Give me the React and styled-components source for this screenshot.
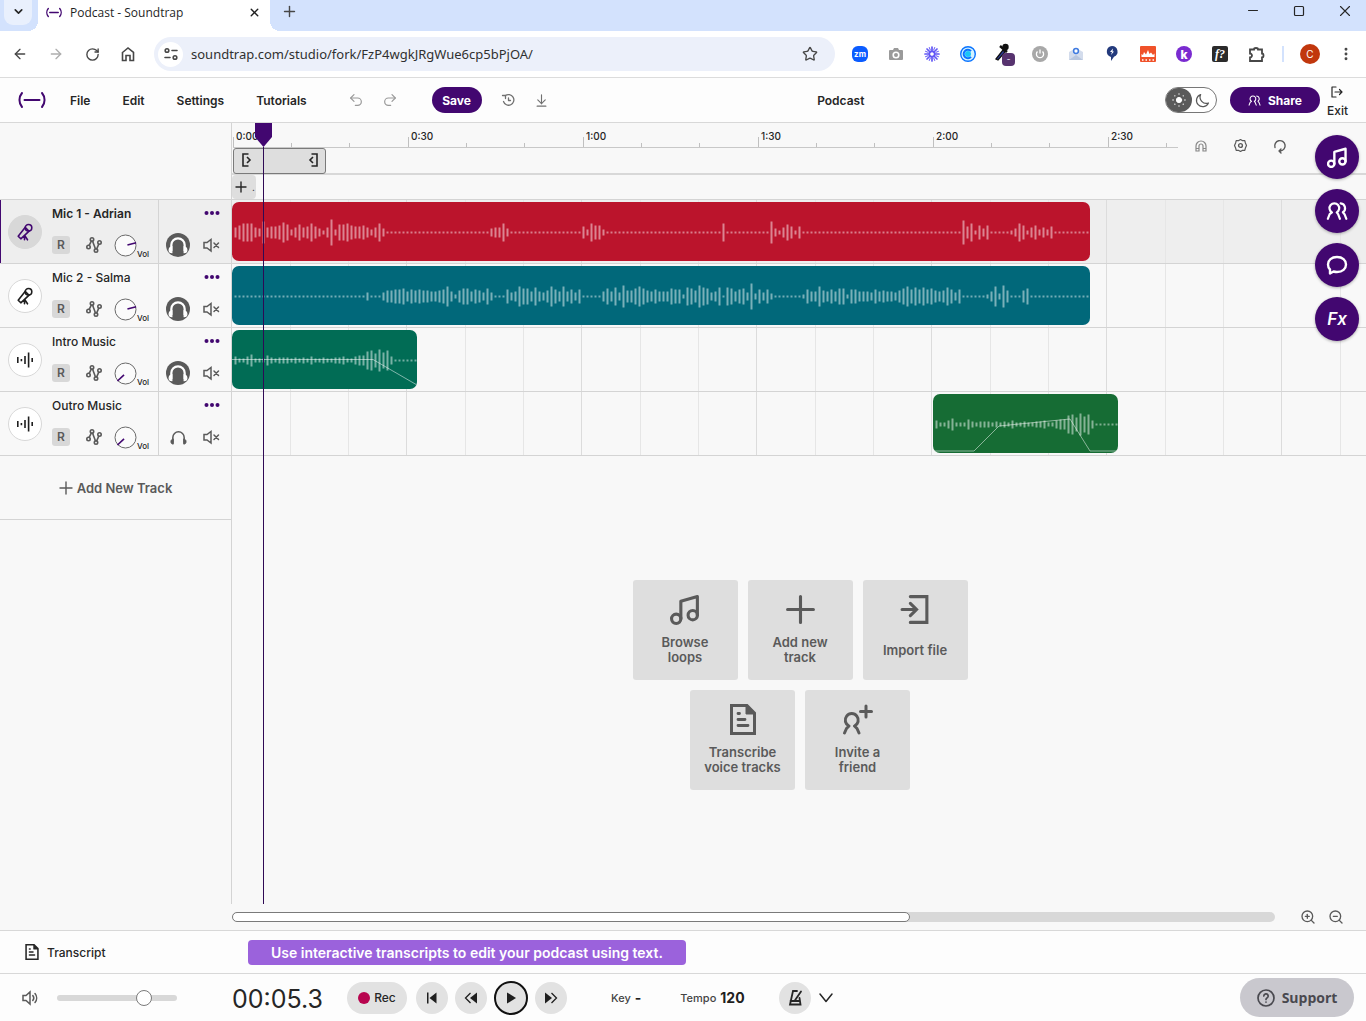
import React, { useState } from 'react';
import styled, { createGlobalStyle } from 'styled-components';
import {
  ArrowDownToLine,
  ArrowLeft,
  ArrowRight,
  ChevronDown,
  EllipsisVertical,
  Plus,
  Redo2,
  RotateCw,
  Star,
  Undo2,
  X,
  ZoomIn,
  ZoomOut,
} from 'lucide-react';

const GlobalStyle = createGlobalStyle`
  *, *::before, *::after {
    box-sizing: border-box;
  }

  body {
    margin: 0;
    background: #f8f8f8;
    color: #262626;
    font-family: Inter, 'Liberation Sans', sans-serif;
    font-size: 13px;
  }

  button, input {
    margin: 0;
    padding: 0;
    border: 0;
    background: none;
    color: inherit;
    font: inherit;
  }

  button {
    cursor: pointer;
  }

  a {
    color: inherit;
    text-decoration: none;
  }

  svg {
    display: block;
    flex: none;
  }
`;

const Page = styled.div`
  display: flex;
  flex-direction: column;
  min-height: 100vh;
`;

/* ---------- browser window ---------- */

const TabStrip = styled.div`
  display: flex;
  align-items: flex-start;
  height: 31px;
  background: #d3e2fd;
  font-family: 'Open Sans', 'Noto Sans', sans-serif;
`;

const TabSearch = styled.button`
  display: flex;
  align-items: center;
  justify-content: center;
  width: 28px;
  height: 25px;
  margin: 0 6px 0 4px;
  padding-bottom: 2px;
  border-radius: 0 0 9px 9px;
  background: #e9f0fd;
`;

const Tab = styled.div`
  position: relative;
  display: flex;
  align-items: center;
  gap: 8px;
  width: 232px;
  height: 31px;
  padding: 0 9px 7px 8px;
  background: #fff;
  font-size: 12px;
  color: #1f1f1f;

  span {
    flex: 1;
  }

  &::before,
  &::after {
    content: '';
    position: absolute;
    bottom: 0;
    width: 10px;
    height: 10px;
  }

  &::before {
    right: 100%;
    background: radial-gradient(circle at 0 0, transparent 10px, #fff 10px);
  }

  &::after {
    left: 100%;
    background: radial-gradient(circle at 100% 0, transparent 10px, #fff 10px);
  }
`;

const NewTab = styled.button`
  padding: 3px 11px;
`;

const WindowButtons = styled.div`
  display: flex;
  gap: 30px;
  margin-left: auto;
  padding: 3px 13px 0 0;
`;

const BrowserBar = styled.div`
  display: flex;
  align-items: center;
  height: 47px;
  padding-left: 12px;
  border-bottom: 1px solid #dcdcdc;
  background: #fff;
  color: #474747;
`;

const NavButton = styled.button`
  display: flex;
  align-items: center;
  justify-content: center;
  width: 36px;
  height: 32px;
  padding-right: 20px;
  color: ${props => (props.$dim ? '#aeaeae' : '#474747')};
`;

const MoreButton = styled.button`
  display: flex;
  align-items: center;
  width: 28px;
  height: 32px;
`;

const Omnibox = styled.div`
  display: flex;
  flex: 1;
  align-items: center;
  gap: 8px;
  height: 34px;
  margin-right: 7px;
  margin-left: -2px;
  padding: 0 17px 0 4px;
  border-radius: 17px;
  background: #ecf0fa;

  input {
    flex: 1;
    min-width: 0;
    font-family: 'Noto Sans', 'Open Sans', sans-serif;
    font-size: 13px;
    color: #303030;
    outline: none;
  }
`;

const SiteInfo = styled.button`
  display: flex;
  align-items: center;
  justify-content: center;
  width: 25px;
  height: 25px;
  border-radius: 50%;
  background: #fff;
`;

const Extension = styled.button`
  display: flex;
  align-items: center;
  justify-content: center;
  width: 36px;
  height: 32px;
`;

const Divider = styled.span`
  width: 2px;
  height: 16px;
  margin: 0 16px 0 8px;
  background: #d3e2fd;
`;

const Profile = styled.button`
  width: 20px;
  height: 20px;
  margin-right: 18px;
  border-radius: 50%;
  background: #c1370d;
  color: #fff;
  font-size: 10px;
  line-height: 20px;
`;

/* ---------- studio header ---------- */

const Header = styled.header`
  display: flex;
  align-items: center;
  height: 45px;
  padding: 0 18px;
  border-bottom: 1px solid #d8d8d8;
  background: #fdfdfd;
`;

const Menu = styled.nav`
  display: flex;
  gap: 32px;
  margin: 0 41px 0 24px;

  button {
    font-size: 12px;
    font-weight: 600;
  }
`;

const HeaderIcon = styled.button`
  margin-right: ${props => props.$gap}px;
  color: ${props => (props.$dim ? '#9a9a9a' : '#707070')};
`;

const PurpleButton = styled.button`
  display: flex;
  align-items: center;
  justify-content: center;
  gap: 7px;
  width: ${props => props.$width}px;
  height: 26px;
  border-radius: 13px;
  background: #420770;
  color: #fff;
  font-size: 12px;
  font-weight: 700;
`;

const SaveArea = styled.div`
  margin-right: 19px;
`;

const ProjectName = styled.h1`
  flex: 1;
  margin: 0;
  padding-right: 32px;
  font-size: 12px;
  font-weight: 600;
  text-align: center;
`;

const ThemeSwitch = styled.label`
  position: relative;
  display: flex;
  align-items: center;
  justify-content: space-between;
  width: 52px;
  height: 26px;
  margin-right: 13px;
  padding-right: 6px;
  border: 1px solid #777;
  border-radius: 13px;
  background: #fff;
  color: #5a5a5a;

  input {
    position: absolute;
    inset: 0;
    width: 100%;
    height: 100%;
    opacity: 0;
  }
`;

const ThemeKnob = styled.span`
  display: flex;
  align-items: center;
  justify-content: center;
  width: 26px;
  height: 24px;
  border-radius: 12px;
  background: #5a5a5a;
`;

const Exit = styled.a`
  display: flex;
  flex-direction: column;
  align-items: center;
  gap: 6px;
  margin-left: 7px;
  padding-top: 4px;
  font-size: 12px;
  line-height: 14px;
  font-weight: 500;
`;

/* ---------- studio ---------- */

const Studio = styled.main`
  position: relative;
  display: flex;
  flex: 1;
  background: #f8f8f8;
`;

const TrackList = styled.aside`
  display: flex;
  flex: none;
  flex-direction: column;
  width: 232px;
  padding-top: 76px;
  border-right: 1px solid #d4d4d4;
`;

const TrackPanel = styled.section`
  display: flex;
  height: 64px;
  border-top: 1px solid #d4d4d4;
  background: ${props => (props.$selected ? '#eee' : '#f8f8f8')};
  box-shadow: ${props => (props.$selected ? 'inset 1px 0 #420770' : 'none')};
`;

const Avatar = styled.button`
  display: flex;
  flex: none;
  align-items: center;
  justify-content: center;
  align-self: center;
  width: 34px;
  height: 34px;
  margin: 0 10px 0 8px;
  border: 1px solid #d8d8d8;
  border-radius: 50%;
  background: ${props => (props.$selected ? '#d8d8d8' : '#fff')};
  color: ${props => (props.$selected ? '#420770' : '#1f1f1f')};
`;

const TrackBody = styled.div`
  flex: 1;
  padding-top: 6px;
`;

const TrackName = styled.div`
  font-size: 12px;
  line-height: 16px;
  font-weight: ${props => (props.$selected ? 600 : 500)};
`;

const TrackControls = styled.div`
  display: flex;
  align-items: center;
  height: 24px;
  margin-top: 11px;
  color: #5a5a5a;
`;

const RecordArm = styled.button`
  width: 18px;
  height: 18px;
  margin-right: 16px;
  border-radius: 3px;
  background: #d8d8d8;
  font-size: 12px;
  line-height: 18px;
  font-weight: 600;
`;

const VolumeKnob = styled.label`
  position: relative;
  display: flex;
  align-items: flex-end;
  margin-left: 12px;
  color: #262626;
  font-size: 8px;
  line-height: 6px;
  font-weight: 500;

  input {
    position: absolute;
    inset: 0;
    width: 100%;
    opacity: 0;
  }
`;

const TrackSide = styled.div`
  display: flex;
  flex: none;
  flex-direction: column;
  align-items: flex-end;
  width: 73px;
  padding: 10px 11px 0 6px;
  border-left: 1px solid #d4d4d4;
  color: #5a5a5a;
`;

const SideControls = styled.div`
  display: flex;
  align-items: center;
  gap: 13px;
  height: 24px;
  margin-top: 17px;
`;

const SoloButton = styled.button`
  display: flex;
  align-items: center;
  justify-content: center;
  width: 24px;
  height: 24px;
  border-radius: 50%;
  background: ${props => (props.$on ? '#5a5a5a' : 'transparent')};
  color: ${props => (props.$on ? '#fff' : '#5a5a5a')};
`;

const AddTrack = styled.button`
  display: flex;
  align-items: center;
  justify-content: center;
  gap: 4px;
  height: 65px;
  border-top: 1px solid #d4d4d4;
  border-bottom: 1px solid #d4d4d4;
  color: #5a5a5a;
  font-size: 13px;
  font-weight: 600;
`;

const Timeline = styled.div`
  position: relative;
  display: flex;
  flex: 1;
  flex-direction: column;
  min-width: 0;
`;

const TimelineTop = styled.div`
  display: flex;
  height: 52px;
  border-bottom: 2px solid #d8d8d8;
`;

const TimelineScale = styled.div`
  flex: 1;
  min-width: 0;
`;

const Ruler = styled.div`
  display: flex;
  height: 25px;
  margin-left: 1px;
  border-bottom: 1px solid #c8c8c8;
  overflow: hidden;
`;

const RulerMark = styled.div`
  flex: none;
  width: 175px;
  padding: 7px 0 0 3px;
  background:
    linear-gradient(#c0c0c0, #c0c0c0) 0 100% / 1px 10px no-repeat,
    linear-gradient(#c0c0c0, #c0c0c0) 58px 100% / 1px 4px no-repeat,
    linear-gradient(#c0c0c0, #c0c0c0) 116px 100% / 1px 4px no-repeat;
  font-size: 10px;
  line-height: 12px;
  font-weight: 500;
`;

const LoopRange = styled.div`
  display: flex;
  align-items: center;
  justify-content: space-between;
  width: 93px;
  height: 26px;
  margin-left: 1px;
  padding: 0 6px 2px 7px;
  border: 1px solid #7a7a7a;
  border-radius: 3px;
  background: #dedede;
`;

const TimelineTools = styled.div`
  display: flex;
  align-items: flex-start;
  gap: 24px;
  width: 188px;
  padding: 15px 0 0 15px;
  color: #5a5a5a;
`;

const MarkerRow = styled.div`
  height: 24px;
`;

const AddMarker = styled.button`
  display: flex;
  align-items: center;
  gap: 4px;
  width: 24px;
  height: 24px;
  padding-left: 2px;
  border-radius: 4px;
  background: #dedede;
  font-size: 10px;
  overflow: hidden;
`;

const Lane = styled.div`
  height: 64px;
  padding-top: 2px;
  border-top: 1px solid #d4d4d4;
  background:
    linear-gradient(90deg, transparent 58px, #e6e6e6 58px 59px, transparent 59px 116px, #e6e6e6 116px 117px, transparent 117px 174px, #dcdcdc 174px) 0 0 / 175px 100%,
    ${props => (props.$selected ? '#eee' : '#f8f8f8')};
`;

const Clip = styled.div`
  width: ${props => props.$width}px;
  height: 59px;
  margin-left: ${props => props.$start}px;
  border-radius: 7px;
  background: ${props => props.$color};
  overflow: hidden;
`;

const StartArea = styled.div`
  display: flex;
  flex: 1;
  flex-direction: column;
  align-items: center;
  justify-content: center;
  gap: 10px;
  padding: 10px 0 0 2px;
  border-top: 1px solid #d4d4d4;
`;

const CardRow = styled.div`
  display: flex;
  gap: 10px;
`;

const Card = styled.button`
  display: flex;
  flex-direction: column;
  align-items: center;
  width: 105px;
  height: 100px;
  padding: 14px 12px 5px;
  border-radius: 3px;
  background: #dedede;
  color: #5a5a5a;
  font-size: 13px;
  line-height: 15px;
  font-weight: 600;

  span {
    display: flex;
    flex: 1;
    align-items: center;
    white-space: nowrap;
  }
`;

const Playhead = styled.div`
  position: absolute;
  top: 0;
  bottom: 0;
  left: 23px;
  pointer-events: none;
  display: flex;
  flex-direction: column;
  align-items: center;

  &::after {
    content: '';
    flex: 1;
    width: 1px;
    background: #2f0a55;
  }
`;

const ToolDock = styled.div`
  position: absolute;
  top: 12px;
  right: 7px;
  display: flex;
  flex-direction: column;
  gap: 10px;
`;

const DockButton = styled.button`
  display: flex;
  align-items: center;
  justify-content: center;
  width: 44px;
  height: 44px;
  border-radius: 50%;
  background: #420770;
  box-shadow: 0 1px 3px rgba(0, 0, 0, 0.3);
  color: #fff;
  font-size: 17px;
  font-style: italic;
  font-weight: 600;
`;

const ScrollRow = styled.div`
  display: flex;
  align-items: center;
  gap: 12px;
  height: 26px;
  padding: 0 22px 0 232px;
  color: #5a5a5a;
`;

const ScrollTrack = styled.div`
  flex: 1;
  height: 10px;
  margin-right: 13px;
  border-radius: 5px;
  background: #d8d8d8;
`;

const ScrollThumb = styled.div`
  width: 65%;
  height: 10px;
  border: 1px solid #7a7a7a;
  border-radius: 5px;
  background: #fff;
`;

/* ---------- footer ---------- */

const TranscriptBar = styled.div`
  display: flex;
  align-items: center;
  height: 43px;
  padding-left: 25px;
  border-top: 1px solid #d8d8d8;
  background: #fdfdfd;
`;

const TranscriptButton = styled.button`
  display: flex;
  align-items: center;
  gap: 8px;
  width: 223px;
  font-size: 12px;
  font-weight: 500;
`;

const Banner = styled.p`
  margin: 0;
  padding: 0 23px;
  border-radius: 4px;
  background: #9b62dc;
  color: #fff;
  font-size: 14px;
  line-height: 25px;
  font-weight: 600;
`;

const Transport = styled.footer`
  display: flex;
  align-items: center;
  height: 48px;
  padding: 0 12px 0 22px;
  border-top: 1px solid #d8d8d8;
  background: #fdfdfd;
`;

const Volume = styled.label`
  display: flex;
  align-items: center;
  gap: 17px;
  width: 210px;
  color: #5a5a5a;

  input {
    width: 120px;
    height: 16px;
    appearance: none;
  }

  input::-webkit-slider-runnable-track {
    height: 6px;
    border-radius: 3px;
    background: #d8d8d8;
  }

  input::-webkit-slider-thumb {
    width: 16px;
    height: 16px;
    margin-top: -5px;
    border: 1px solid #7a7a7a;
    border-radius: 50%;
    background: #fff;
    appearance: none;
  }
`;

const Clock = styled.time`
  width: 115px;
  padding-top: 2px;
  font-size: 25px;
  font-weight: 400;
`;

const RecButton = styled.button`
  display: flex;
  align-items: center;
  justify-content: center;
  gap: 4px;
  width: 60px;
  height: 32px;
  margin-right: 9px;
  border-radius: 16px;
  background: #e2e2e2;
  font-size: 12px;
  font-weight: 500;

  &::before {
    content: '';
    width: 12px;
    height: 12px;
    border-radius: 50%;
    background: #b8054f;
  }
`;

const PlayerButtons = styled.div`
  display: flex;
  align-items: center;
  gap: 7px;
`;

const RoundButton = styled.button`
  display: flex;
  align-items: center;
  justify-content: center;
  width: ${props => (props.$ring ? 34 : 32)}px;
  height: ${props => (props.$ring ? 34 : 32)}px;
  border: ${props => (props.$ring ? '2px solid #111' : '0')};
  border-radius: 50%;
  background: #e2e2e2;
`;

const Setting = styled.button`
  display: flex;
  align-items: center;
  gap: 4px;
  color: #444;
  font-size: 11px;
  font-weight: 500;

  strong {
    color: #1f1f1f;
    font-size: 14px;
    font-weight: 700;
  }
`;

const Settings = styled.div`
  display: flex;
  gap: 39px;
  margin: 0 34px 0 44px;
`;

const MetronomeGroup = styled.div`
  display: flex;
  align-items: center;
  gap: 8px;
`;

const Support = styled.button`
  display: flex;
  align-items: center;
  justify-content: center;
  gap: 7px;
  width: 114px;
  height: 39px;
  margin-left: auto;
  border-radius: 20px;
  background: #c9c8ce;
  color: #49494f;
  font-family: 'Open Sans', 'Noto Sans', sans-serif;
  font-size: 14px;
  font-weight: 700;
`;

/* ---------- icons ---------- */

const Icon = ({ size = 16, box = 24, stroke = 2, children }) => (
  <svg
    width={size}
    height={size}
    viewBox={`0 0 ${box} ${box}`}
    fill="none"
    stroke="currentColor"
    strokeWidth={stroke}
    strokeLinecap="round"
    strokeLinejoin="round"
    aria-hidden="true"
  >
    {children}
  </svg>
);

const Logo = ({ width, height, stroke }) => (
  <svg width={width} height={height} viewBox="0 0 28 18" fill="none" stroke="#420770" strokeWidth={stroke} strokeLinecap="round">
    <path d="M4 2C.6 6 .6 12 4 16M24 2c3.400 4 3.400 10 0 14M6.500 9h15" />
  </svg>
);

const NotesIcon = ({ size, stroke }) => (
  <Icon size={size} box={30} stroke={stroke}>
    <circle cx="6" cy="24" r="4.500" />
    <circle cx="22" cy="20.500" r="4.500" />
    <path d="M10.500 24V7L26.500 2.500V20.500" />
  </Icon>
);

const PeopleIcon = ({ size, stroke }) => (
  <Icon size={size} stroke={stroke}>
    <path d="M2 20.500l2-5 2.500-2A5.300 5.300 0 1 1 11.700 13.500L13.200 15.500l2 5" />
    <path d="M16 3.700a5.300 5.300 0 0 1 2.400 9.700L20.200 15.500l2 5" />
  </Icon>
);

const MicIcon = () => (
  <Icon size={18} box={18} stroke={1.6}>
    <circle cx="12.500" cy="4.800" r="3.300" />
    <path d="M9.300 4.300L2.200 13.200l2.600 2.600 8.300-7.600M9.400 4.600l3.700 3.600M8.500 16.800v-4.600l3 4.600" />
  </Icon>
);

const WaveIcon = () => (
  <svg width="18" height="18" viewBox="0 0 18 18" stroke="currentColor" strokeWidth="1.600" aria-hidden="true">
    <path d="M1.800 6v6M5.400 8v2.200M9 5v8M12.600 1.500v15M16.200 7v4" />
  </svg>
);

const AutomationIcon = () => (
  <Icon size={16} box={16} stroke={1.6}>
    <circle cx="2.500" cy="10" r="1.700" />
    <circle cx="6" cy="2.500" r="1.700" />
    <circle cx="10" cy="13.500" r="1.700" />
    <circle cx="13.500" cy="5.500" r="1.700" />
    <path d="M3.200 8.400L5.300 4.200M6.600 4.200l2.800 7.600M10.700 11.800l2.100-4.600" />
  </Icon>
);

const HeadphonesIcon = ({ on }) => (
  <svg width={on ? 20 : 17} height={on ? 20 : 17} viewBox="0 0 18 18" fill="none" stroke="currentColor">
    <path d="M3 14.500V9a6 6 0 0 1 12 0v5.500" strokeWidth={on ? 2 : 1.6} />
    <path d="M3.500 10.500c-2 .5-2.500 1.500-2.500 3s.8 2.500 2.500 2.500zM14.500 10.500c2 .5 2.500 1.500 2.500 3s-.8 2.500-2.500 2.500z" fill="currentColor" strokeWidth="1" />
  </svg>
);

const MuteIcon = () => (
  <Icon size={17} box={17} stroke={1.5}>
    <path d="M1 5.500V11h3l4 3V2.500l-4 3zM11 6l4.500 4.500M15.500 6L11 10.500" strokeLinejoin="miter" />
  </Icon>
);

const DotsIcon = () => (
  <svg width="16" height="6" viewBox="0 0 16 6" fill="#420770" aria-hidden="true">
    <circle cx="2.500" cy="3" r="2" />
    <circle cx="8" cy="3" r="2" />
    <circle cx="13.500" cy="3" r="2" />
  </svg>
);

const DocIcon = ({ width, height }) => (
  <svg width={width} height={height} viewBox="0 0 26 31" fill="none" stroke="currentColor" strokeWidth="3" aria-hidden="true">
    <path d="M1.500 1.500h15.500l7.500 7.500v20.500h-23z" />
    <path d="M16 1.500v8.500h8.500z" fill="currentColor" strokeWidth="1" />
    <path d="M8 9.500h1.500M8 15.500h7M8 21.500h10" strokeWidth="2.800" strokeLinecap="round" />
  </svg>
);

const Knob = ({ angle }) => (
  <svg width="23" height="23" viewBox="0 0 23 23" fill="none" aria-hidden="true">
    <circle cx="11.500" cy="11.500" r="10.500" fill="#fbfbfb" stroke="#6a6a6a" />
    <path d="M13.500 11.500h9" stroke="#420770" strokeWidth="1.600" transform={`rotate(${angle} 11.500 11.500)`} />
  </svg>
);

/* ---------- data ---------- */

const still = count => Array(count).fill(1);

const adrianWave = [
  5, 7, 9, 9, 9, 5, 4, 11, 5, 6, 6, 7, 10, 8, 3, 5, 8, 5, 6, 9, 6, 4, 2, 5, 13, 3, 8, 8, 9, 7, 6, 6, 7, 5, 3, 5, 9, 4,
  ...still(26), 4, 5, 5, 9, 4,
  ...still(18), 6, 3, 9, 7, 7, 3,
  ...still(29), 9,
  ...still(11), 11, 4, 2, 5, 8, 6, 2, 6,
  ...still(40), 12, 6, 9, 2, 7, 4, 7,
  ...still(5), 2, 4, 9, 7, 2, 5, 7, 3, 5, 3, 6,
  ...still(9),
];

const salmaWave = [
  ...still(33), 4, ...still(3),
  4, 6, 6, 7, 7, 8, 5, 7, 6, 7, 6, 6, 5, 5, 6, 7, 10, 5, 2, 6, 8, 8, 5, 7, 6, 4, 8, 4,
  ...still(3), 7, 4, 5, 10, 8, 8, 5, 9, 5, 4, 6, 10, 7, 5, 10, 5, 7, 4, 7,
  ...still(5), 5, 8, 5, 9, 4, 11, 6, 6, 8, 10, 8, 6, 5, 7, 5, 5, 5, 8, 7, 7, 2, 9, 8, 6, 11, 9, 8, 4, 5, 9, 1,
  9, 8, 5, 7, 8, 4, 13, 3, 7, 4, 7, 3,
  ...still(7), 2, 7, 5, 5, 10, 6, 5, 7, 5, 8, 8, 2, 7, 7, 5, 5, 5, 4, 7, 5, 6, 5, 5, 4, 6, 8, 10, 7, 9, 7, 9, 7, 8, 6, 5, 6, 9, 7, 4, 7,
  ...still(6), 2, 5, 10, 3, 11, 6,
  ...still(3), 6, 8,
  ...still(15),
];

const musicWave = [
  4, 2, 2, 4, 6, 2, 2, 2, 5, 3, 2, 3, 3, 3, 2, 3, 2, 3, 2, 4, 2, 2, 3, 2, 2, 3, 3, 4, 2, 2, 4, 5, 5, 9, 10, 7, 11, 8, 10, 4,
  ...still(6),
];

const tracks = [
  { id: 1, name: 'Mic 1 - Adrian', voice: true, solo: true, angle: -15, start: 0, width: 858, color: '#bb142c', wave: adrianWave },
  { id: 2, name: 'Mic 2 - Salma', voice: true, solo: true, angle: -15, start: 0, width: 858, color: '#01687a', wave: salmaWave },
  { id: 3, name: 'Intro Music', solo: true, angle: 137, start: 0, width: 185, color: '#016c55', wave: musicWave, fade: '0,29.500 141,29.500 185,55' },
  { id: 4, name: 'Outro Music', solo: false, angle: 137, start: 701, width: 185, color: '#166c34', wave: musicWave, fade: '0,57 41,57 66,32 137,25 157,57 185,57' },
];

const marks = ['0:00', '0:30', '1:00', '1:30', '2:00', '2:30'];

const Wave = ({ width, wave, fade }) => (
  <svg width={width} height="59" viewBox={`0 0 ${width} 59`} fill="none" stroke="#fff" aria-hidden="true">
    {wave.map((half, i) => (
      half === 1
        ? <path key={i} d={`M${2.5 + i * 4} 30.500h2`} strokeWidth="2" strokeOpacity="0.450" />
        : <path key={i} d={`M${3.5 + i * 4} ${30.5 - half}v${half * 2}`} strokeWidth="2" strokeOpacity="0.480" />
    ))}
    {fade && <polyline points={fade} strokeOpacity="0.500" />}
  </svg>
);

/* ---------- parts ---------- */

const Browser = () => (
  <>
    <TabStrip>
      <TabSearch aria-label="Search tabs"><ChevronDown size={13} strokeWidth={3} /></TabSearch>
      <Tab>
        <Logo width={16} height={11} stroke={2.4} />
        <span>Podcast - Soundtrap</span>
        <button aria-label="Close tab"><X size={13} strokeWidth={2.6} /></button>
      </Tab>
      <NewTab aria-label="New tab"><Plus size={17} strokeWidth={2} color="#474747" /></NewTab>
      <WindowButtons>
        <button aria-label="Minimize"><Icon size={16} box={16} stroke={1}><path d="M3.500 7.500h9" /></Icon></button>
        <button aria-label="Maximize"><Icon size={16} box={16} stroke={1.2}><rect x="3.500" y="3.500" width="9" height="9" rx="1" /></Icon></button>
        <button aria-label="Close"><Icon size={16} box={16} stroke={1.1}><path d="M3.500 3.500l9 9M12.500 3.500l-9 9" /></Icon></button>
      </WindowButtons>
    </TabStrip>
    <BrowserBar>
      <NavButton aria-label="Back"><ArrowLeft size={16} /></NavButton>
      <NavButton aria-label="Forward" $dim><ArrowRight size={16} /></NavButton>
      <NavButton aria-label="Reload"><RotateCw size={15} strokeWidth={2.2} /></NavButton>
      <NavButton aria-label="Home">
        <Icon size={16} box={16} stroke={1.6}><path d="M2.500 6.500L8 2l5.500 4.500v8H10V9.500H6v5H2.500z" strokeLinejoin="miter" /></Icon>
      </NavButton>
      <Omnibox>
        <SiteInfo aria-label="Site information">
          <Icon size={14} box={14} stroke={1.6}>
            <circle cx="3" cy="3.500" r="1.800" />
            <path d="M8 3.500h5M1 10.500h5" />
            <circle cx="11" cy="10.500" r="1.800" />
          </Icon>
        </SiteInfo>
        <input aria-label="Address" defaultValue="soundtrap.com/studio/fork/FzP4wgkJRgWue6cp5bPjOA/" />
        <button aria-label="Bookmark"><Star size={16} strokeWidth={2} /></button>
      </Omnibox>
      <Extension aria-label="Zoom">
        <svg width="16" height="16" viewBox="0 0 16 16"><rect width="16" height="16" rx="6" fill="#0b5cff" /><text x="8" y="11" fill="#fff" fontSize="8" fontWeight="700" textAnchor="middle">zm</text></svg>
      </Extension>
      <Extension aria-label="Screenshot">
        <svg width="14" height="14" viewBox="0 0 14 14"><path d="M1 3h3l1-2h4l1 2h3a1 1 0 0 1 1 1v8a1 1 0 0 1-1 1H1a1 1 0 0 1-1-1V4a1 1 0 0 1 1-1z" fill="#9a9a9a" /><circle cx="7" cy="8" r="2.800" fill="none" stroke="#fff" strokeWidth="1.600" /></svg>
      </Extension>
      <Extension aria-label="Loom">
        <svg width="16" height="16" viewBox="0 0 16 16" stroke="#6257f5" strokeWidth="1.700" strokeLinecap="round"><circle cx="8" cy="8" r="2.700" fill="none" /><path d="M8 1v4M8 11v4M1 8h4M11 8h4M3 3l3 3M10 10l3 3M13 3l-3 3M6 10l-3 3" /><path d="M5.300 1.500l1 2.500M9.700 12l1 2.500M1.500 10.700L4 9.700M12 6.300l2.500-1M1.500 5.300l2.500 1M12 9.700l2.500 1M10.700 1.500l-1 2.500M6.300 12l-1 2.500" strokeWidth="1" /></svg>
      </Extension>
      <Extension aria-label="Calendar">
        <svg width="16" height="16" viewBox="0 0 16 16"><circle cx="8" cy="8" r="7.300" fill="#d5f2ff" stroke="#0a74ff" strokeWidth="1.400" /><circle cx="8" cy="8" r="3" fill="#19c5f7" /><path d="M11 5.200a4.200 4.200 0 1 0 0 5.600" fill="none" stroke="#0a74ff" strokeWidth="2" /></svg>
      </Extension>
      <Extension aria-label="Color picker">
        <svg width="22" height="24" viewBox="0 0 22 24"><path d="M3 17l7-9 2 2-7 8z" fill="#2c3c9e" stroke="#111" strokeWidth="1.300" /><path d="M7 4l7 6" stroke="#111" strokeWidth="2.500" /><circle cx="12.500" cy="5" r="3.200" fill="#111" /><rect x="9" y="11" width="13" height="13" rx="4" fill="#57336f" /><text x="15.500" y="20" fill="#fff" fontSize="8" textAnchor="middle">-</text></svg>
      </Extension>
      <Extension aria-label="Power">
        <svg width="16" height="16" viewBox="0 0 16 16" fill="none"><circle cx="8" cy="8" r="8" fill="#a8a8a8" /><path d="M5.500 5.500a3.600 3.600 0 1 0 5 0M8 3.500v4" stroke="#fff" strokeWidth="1.300" /></svg>
      </Extension>
      <Extension aria-label="Mail">
        <svg width="16" height="16" viewBox="0 0 16 16"><path d="M1 6l7-4 7 4v8H1z" fill="#d3dcec" /><circle cx="8" cy="5" r="2.400" fill="#fff" stroke="#3f7be0" strokeWidth="1.500" /><path d="M1 14l7-5 7 5z" fill="#b8c6de" /></svg>
      </Extension>
      <Extension aria-label="Pin">
        <svg width="14" height="16" viewBox="0 0 14 16"><path d="M7 0a5.600 5.600 0 0 1 2 10.800L6 15V11A5.600 5.600 0 0 1 7 0z" fill="#233a7c" /><path d="M8 2.500L5 6h2L6 9l3-3.500H7.500z" fill="#fff" /></svg>
      </Extension>
      <Extension aria-label="Heatmap">
        <svg width="16" height="16" viewBox="0 0 16 16"><rect width="16" height="16" rx="1" fill="#f0522a" /><path d="M1.500 11V8l1.500 1 1-3 2 2.500L8 4l1.500 4L11 6.500 13 9l1.500-1.500V11z" fill="#fff" /><path d="M2 14h12" stroke="#fff" strokeWidth="1.500" strokeDasharray="1.500 2" /></svg>
      </Extension>
      <Extension aria-label="Keywords">
        <svg width="16" height="16" viewBox="0 0 16 16"><circle cx="8" cy="8" r="8" fill="#7a2bd0" /><text x="8" y="12.500" fill="#fff" fontSize="12" fontWeight="800" textAnchor="middle">k</text></svg>
      </Extension>
      <Extension aria-label="Fonts">
        <svg width="16" height="16" viewBox="0 0 16 16"><rect width="16" height="16" rx="2" fill="#2b2b2b" /><text x="8" y="12" fill="#fff" fontSize="12" fontWeight="700" fontStyle="italic" fontFamily="Liberation Serif, serif" textAnchor="middle">f?</text></svg>
      </Extension>
      <Extension aria-label="Extensions">
        <Icon size={17} box={17} stroke={1.8}><path d="M2 3.500h4a2 1.500 0 0 1 4 0h4v4a1.500 2 0 0 1 0 4V15H2v-3.500a2 2 0 0 0 0-4z" strokeLinejoin="miter" /></Icon>
      </Extension>
      <Divider />
      <Profile aria-label="Profile">C</Profile>
      <MoreButton aria-label="Browser menu"><EllipsisVertical size={16} strokeWidth={2.4} /></MoreButton>
    </BrowserBar>
  </>
);

const StudioHeader = () => {
  const [dark, setDark] = useState(false);

  return (
    <Header>
      <Logo width={28} height={18} stroke={2} />
      <Menu>
        <button>File</button>
        <button>Edit</button>
        <button>Settings</button>
        <button>Tutorials</button>
      </Menu>
      <HeaderIcon aria-label="Undo" $dim $gap={18}><Undo2 size={16} strokeWidth={1.8} /></HeaderIcon>
      <HeaderIcon aria-label="Redo" $dim $gap={34}><Redo2 size={16} strokeWidth={1.8} /></HeaderIcon>
      <SaveArea>
        <PurpleButton $width={50}>Save</PurpleButton>
      </SaveArea>
      <HeaderIcon aria-label="Version history" $gap={18}>
        <Icon size={15} box={15} stroke={1.3}><path d="M4.200 2.800a5.300 5.300 0 1 1-1.700 5.700M1.500 2.500h3v3M7.500 5v2.500h2" /></Icon>
      </HeaderIcon>
      <HeaderIcon aria-label="Download" $gap={0}><ArrowDownToLine size={15} strokeWidth={1.8} /></HeaderIcon>
      <ProjectName>Podcast</ProjectName>
      <ThemeSwitch>
        <input type="checkbox" aria-label="Dark mode" checked={dark} onChange={() => setDark(!dark)} />
        <ThemeKnob>
          <svg width="16" height="16" viewBox="0 0 16 16" stroke="#fff" strokeLinecap="round">
            <circle cx="8" cy="8" r="2.600" fill="#fff" />
            <path d="M8 2v.1M8 14v-.1M2 8h.1M14 8h-.1M3.800 3.800h.1M12.200 3.800h.1M3.800 12.200h.1M12.200 12.200h.1" strokeWidth="1.300" />
          </svg>
        </ThemeKnob>
        <Icon size={15} stroke={2}><path d="M9 2.500A10 10 0 1 0 21.500 16 10 10 0 0 1 9 2.500z" /></Icon>
      </ThemeSwitch>
      <PurpleButton $width={90}><PeopleIcon size={13} stroke={2} />Share</PurpleButton>
      <Exit href="#exit">
        <Icon size={12} box={12} stroke={1.2}><path d="M5 1H1v10h4M4 6h7M8.500 3.500L11 6 8.500 8.500" /></Icon>
        Exit
      </Exit>
    </Header>
  );
};

const TrackRow = ({ track, selected }) => (
  <TrackPanel $selected={selected}>
    <Avatar aria-label={track.name} $selected={selected}>
      {track.voice ? <MicIcon /> : <WaveIcon />}
    </Avatar>
    <TrackBody>
      <TrackName $selected={selected}>{track.name}</TrackName>
      <TrackControls>
        <RecordArm>R</RecordArm>
        <button aria-label="Automation"><AutomationIcon /></button>
        <VolumeKnob>
          <Knob angle={track.angle} />
          <input type="range" />
          Vol
        </VolumeKnob>
      </TrackControls>
    </TrackBody>
    <TrackSide>
      <button aria-label="Track menu"><DotsIcon /></button>
      <SideControls>
        <SoloButton aria-label="Solo" $on={track.solo}><HeadphonesIcon on={track.solo} /></SoloButton>
        <button aria-label="Mute"><MuteIcon /></button>
      </SideControls>
    </TrackSide>
  </TrackPanel>
);

const App = () => {
  const [volume, setVolume] = useState(76);

  return (
    <Page>
      <GlobalStyle />
      <Browser />
      <StudioHeader />

      <Studio>
        <TrackList>
          {tracks.map((track, i) => (
            <TrackRow key={track.id} track={track} selected={i === 0} />
          ))}
          <AddTrack><Icon size={14} box={14} stroke={1.4}><path d="M7 1v12M1 7h12" /></Icon>Add New Track</AddTrack>
        </TrackList>

        <Timeline>
          <TimelineTop>
            <TimelineScale>
              <Ruler>
                {marks.map(mark => <RulerMark key={mark}>{mark}</RulerMark>)}
              </Ruler>
              <LoopRange>
                <Icon size={14} box={14} stroke={1.6}><path d="M7.500 1H2v12h5.500M6 4l3 3-3 3" strokeLinecap="butt" strokeLinejoin="miter" /></Icon>
                <Icon size={14} box={14} stroke={1.6}><path d="M6.500 1H12v12H6.500M8 4L5 7l3 3" strokeLinecap="butt" strokeLinejoin="miter" /></Icon>
              </LoopRange>
            </TimelineScale>
            <TimelineTools>
              <button aria-label="Snap to grid">
                <Icon size={16} box={16} stroke={1.2}><path d="M3 13V8a5 5 0 0 1 10 0v5h-3V8a2 2 0 0 0-4 0v5zM3 10.500h3M10 10.500h3" strokeOpacity="0.700" strokeLinejoin="miter" /></Icon>
              </button>
              <button aria-label="Timeline settings">
                <Icon size={15} box={15} stroke={1.4}><path d="M7.500 1.500l1.700 1.100 2.600.1.600 2.300 1.100 2.500-1.100 2.500-.6 2.300-2.600.1-1.700 1.100-1.700-1.100-2.600-.1-.6-2.300-1.100-2.500 1.100-2.500.6-2.300 2.600-.1z" strokeWidth="1.200" /><circle cx="7.500" cy="7.500" r="1.900" /></Icon>
              </button>
              <button aria-label="Loop">
                <Icon size={16} box={16} stroke={1.4}><path d="M3 9.500A5.200 5.200 0 1 1 8.500 13H7M9 11l-2 2 2 2" /></Icon>
              </button>
            </TimelineTools>
          </TimelineTop>
          <MarkerRow>
            <AddMarker><Icon size={14} box={14} stroke={1.4}><path d="M7 2v10M2 7h10" /></Icon>.</AddMarker>
          </MarkerRow>
          {tracks.map((track, i) => (
            <Lane key={track.id} $selected={i === 0}>
              <Clip $start={track.start} $width={track.width} $color={track.color}>
                <Wave width={track.width} wave={track.wave} fade={track.fade} />
              </Clip>
            </Lane>
          ))}
          <StartArea>
            <CardRow>
              <Card><NotesIcon size={31} stroke={3} /><span>Browse<br />loops</span></Card>
              <Card><Icon size={31} box={30} stroke={3}><path d="M15 2.500v25M2.500 15h25" /></Icon><span>Add new<br />track</span></Card>
              <Card>
                <Icon size={31} box={30} stroke={3}><path d="M10 2.500h16v25H10M2 15h14M10 9l6 6-6 6" strokeLinejoin="miter" /></Icon>
                <span>Import file</span>
              </Card>
            </CardRow>
            <CardRow>
              <Card><DocIcon width={26} height={31} /><span>Transcribe<br />voice tracks</span></Card>
              <Card>
                <Icon size={31} box={31} stroke={3}><path d="M2.500 29l2-4.500 2.500-2.500A6.500 6.500 0 1 1 12.500 22L15 24.500l2 4.500M24 2v11M18.500 7.500h11" /></Icon>
                <span>Invite a<br />friend</span>
              </Card>
            </CardRow>
          </StartArea>
          <Playhead>
            <svg width="17" height="24" viewBox="0 0 17 24" fill="#420770"><path d="M0 0h17v14l-8.500 10L0 14z" /></svg>
          </Playhead>
        </Timeline>

        <ToolDock>
          <DockButton aria-label="Loops"><NotesIcon size={21} stroke={3.4} /></DockButton>
          <DockButton aria-label="Collaborators"><PeopleIcon size={22} stroke={2.4} /></DockButton>
          <DockButton aria-label="Chat">
            <Icon size={24} stroke={2.4}><path d="M12 4c5.500 0 9 3.200 9 7.500S17.500 19 12 19c-1.300 0-2.500-.2-3.500-.5L5 20.500v-4c-1.400-1.300-2-3-2-5C3 7.200 6.500 4 12 4z" /></Icon>
          </DockButton>
          <DockButton>Fx</DockButton>
        </ToolDock>
      </Studio>

      <ScrollRow>
        <ScrollTrack><ScrollThumb /></ScrollTrack>
        <button aria-label="Zoom in"><ZoomIn size={16} /></button>
        <button aria-label="Zoom out"><ZoomOut size={16} /></button>
      </ScrollRow>

      <TranscriptBar>
        <TranscriptButton><DocIcon width={14} height={16} />Transcript</TranscriptButton>
        <Banner>Use interactive transcripts to edit your podcast using text.</Banner>
      </TranscriptBar>

      <Transport>
        <Volume>
          <Icon size={18} box={18} stroke={1.500}><path d="M1 6.500v5h3L8 15V3L4 6.500zM10.800 6.500a4 4 0 0 1 0 5M13 4.500a7 7 0 0 1 0 9" strokeLinejoin="miter" /></Icon>
          <input type="range" aria-label="Volume" value={volume} onChange={e => setVolume(e.target.value)} />
        </Volume>
        <Clock>00:05.3</Clock>
        <RecButton>Rec</RecButton>
        <PlayerButtons>
          <RoundButton aria-label="Go to start">
            <svg width="12" height="12" viewBox="0 0 12 12" fill="#1f1f1f"><path d="M1 .5h1.500v11H1zM10.500.5v11L3.500 6z" /></svg>
          </RoundButton>
          <RoundButton aria-label="Rewind">
            <svg width="14" height="12" viewBox="0 0 14 12" fill="#1f1f1f"><path d="M13 .5v11L6 6z" /><path d="M6.500 1L1.500 6l5 5" fill="none" stroke="#1f1f1f" strokeWidth="1.300" /></svg>
          </RoundButton>
          <RoundButton aria-label="Play" $ring>
            <svg width="12" height="12" viewBox="0 0 12 12" fill="#1f1f1f"><path d="M2 .5l9 5.500-9 5.500z" /></svg>
          </RoundButton>
          <RoundButton aria-label="Fast forward">
            <svg width="14" height="12" viewBox="0 0 14 12" fill="#1f1f1f"><path d="M1 .5v11L8 6z" /><path d="M7.500 1l5 5-5 5" fill="none" stroke="#1f1f1f" strokeWidth="1.300" /></svg>
          </RoundButton>
        </PlayerButtons>
        <Settings>
          <Setting>Key <strong>-</strong></Setting>
          <Setting>Tempo <strong>120</strong></Setting>
        </Settings>
        <MetronomeGroup>
          <RoundButton aria-label="Metronome">
            <Icon size={18} box={18} stroke={1.800}><path d="M11 2H7L4 15.500h10.500L13.500 9M4.500 12h9M8.500 12L15 2.500" strokeLinejoin="miter" /></Icon>
          </RoundButton>
          <button aria-label="Metronome options"><Icon size={14} box={14} stroke={1.500}><path d="M1 3l6 7.500L13 3" /></Icon></button>
        </MetronomeGroup>
        <Support>
          <Icon size={18} box={18} stroke={1.700}><circle cx="9" cy="9" r="8" /><path d="M6.800 7a2.200 2.200 0 1 1 3.200 2c-.7.400-1 .8-1 1.500M9 13v.1" /></Icon>
          Support
        </Support>
      </Transport>
    </Page>
  );
};

export default App;
